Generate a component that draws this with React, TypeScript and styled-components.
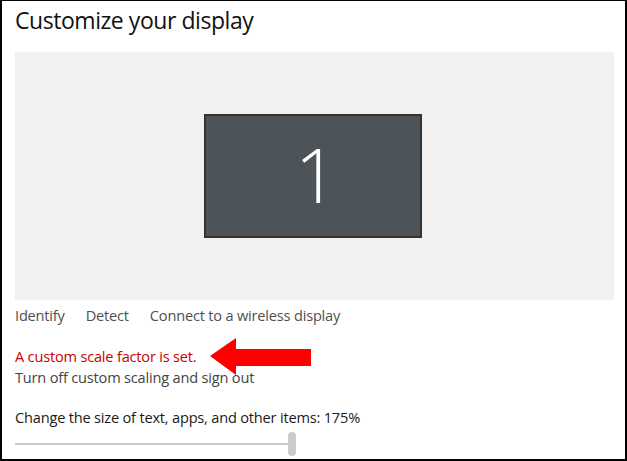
import React from "react";
import styled, { createGlobalStyle } from "styled-components";

const Global = createGlobalStyle`
  html, body { margin: 0; padding: 0; background: #fff; }
  body { font-family: "Open Sans", "Noto Sans", sans-serif; }
`;

const Frame = styled.div`
  box-sizing: border-box;
  width: 627px;
  height: 461px;
  border: 2px solid #000;
  border-top-width: 1px;
  padding: 0 11px 0 13px;
  display: flex;
  flex-direction: column;
  overflow: hidden;
  background: #fff;
`;

const Title = styled.h1`
  margin: 0;
  padding-top: 3px;
  height: 51px;
  box-sizing: border-box;
  font-size: 23px;
  font-weight: 400;
  color: #111;
  letter-spacing: -0.45px;
  line-height: 32px;
`;

const Preview = styled.div`
  height: 248px;
  background: #f1f1f1;
  display: flex;
  align-items: center;
  justify-content: center;
`;

const Monitor = styled.div`
  box-sizing: border-box;
  width: 218px;
  height: 124px;
  margin-left: -4px;
  background: #4c5459;
  border: 2px solid #333;
  display: flex;
  align-items: center;
  justify-content: center;
  color: #fff;
  font-family: "Open Sans", sans-serif;
  font-weight: 300;
  font-size: 76px;
  line-height: 1;
  padding-left: 8px;
  padding-bottom: 4px;
`;

const LinkRow = styled.div`
  display: flex;
  gap: 21px;
  margin-top: 4px;
  height: 22px;
  align-items: center;
`;

const Link = styled.span`
  font-size: 14.6px;
  color: #4f4f4f;
  letter-spacing: -0.2px;
`;

const Notice = styled.div`
  position: relative;
  margin-top: 20px;
  display: flex;
  flex-direction: column;
`;

const Line = styled.div<{ $red?: boolean }>`
  font-size: 14.6px;
  line-height: 21px;
  color: ${(p) => (p.$red ? "#c80000" : "#444")};
  letter-spacing: -0.2px;
`;

const Arrow = styled.svg`
  position: absolute;
  left: 195px;
  top: -8px;
`;

const Label = styled.div`
  margin-top: 19px;
  font-size: 14.6px;
  line-height: 21px;
  color: #1a1a1a;
  letter-spacing: -0.2px;
`;

const SliderRow = styled.div`
  position: relative;
  margin-top: 4px;
  width: 281px;
  height: 24px;
  display: flex;
  align-items: center;
`;

const Track = styled.div`
  flex: 1;
  height: 2px;
  background: #ccc;
`;

const Thumb = styled.div`
  width: 8px;
  height: 24px;
  border-radius: 4px;
  background: #cbcbcb;
`;

export default function App() {
  return (
    <>
      <Global />
      <Frame>
        <Title>Customize your display</Title>
        <Preview>
          <Monitor>1</Monitor>
        </Preview>
        <LinkRow>
          <Link>Identify</Link>
          <Link>Detect</Link>
          <Link>Connect to a wireless display</Link>
        </LinkRow>
        <Notice>
          <Line $red>A custom scale factor is set.</Line>
          <Line>Turn off custom scaling and sign out</Line>
          <Arrow width="102" height="38" viewBox="0 0 102 38">
            <polygon points="0,18 26,0 26,11 101,11 101,28 26,28 26,37" fill="#f00" />
          </Arrow>
        </Notice>
        <Label>Change the size of text, apps, and other items: 175%</Label>
        <SliderRow>
          <Track />
          <Thumb />
        </SliderRow>
      </Frame>
    </>
  );
}
